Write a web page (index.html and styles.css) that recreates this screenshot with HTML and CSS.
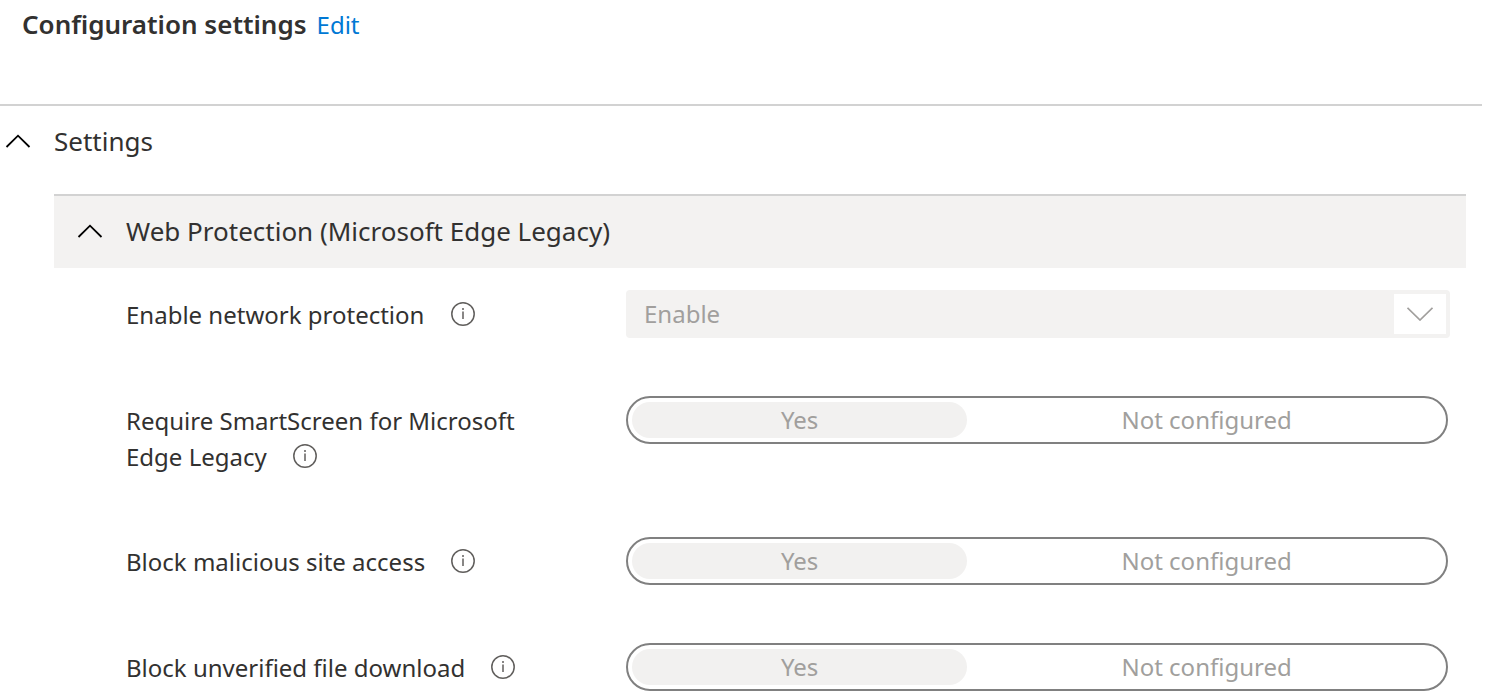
FILE: index.html
```
<!DOCTYPE html>
<html lang="en">
<head>
    <meta charset="UTF-8">
    <meta name="viewport" content="width=device-width, initial-scale=1.0">
    <title>Configuration settings</title>
    <link rel="stylesheet" href="styles.css">
</head>
<body>
<!-- Shared icons -->
<svg class="sprite" aria-hidden="true">
    <symbol id="chevron-up" viewBox="0 0 26 14">
        <path d="M1.500 13 13 1.700 24.500 13" fill="none" stroke="currentColor" stroke-width="1.800"/>
    </symbol>
    <symbol id="chevron-down" viewBox="0 0 26 14">
        <path d="M.5 .8 13 13 25.500 .8" fill="none" stroke="currentColor" stroke-width="1.700"/>
    </symbol>
    <symbol id="info" viewBox="0 0 24 24">
        <circle cx="12" cy="12" r="11.200" fill="none" stroke="currentColor" stroke-width="1.500"/>
        <path d="M12 9.500v7.500" stroke="currentColor" stroke-width="1.500"/>
        <circle cx="12" cy="7" r="1" fill="currentColor"/>
    </symbol>
</svg>

<header class="page-header">
    <h1>Configuration settings</h1>
    <a href="#edit">Edit</a>
</header>

<main class="settings">
    <h2>
        <button type="button" class="toggle-section" aria-expanded="true">
            <svg class="chevron"><use href="#chevron-up"/></svg>
            Settings
        </button>
    </h2>

    <section class="group">
        <h3>
            <button type="button" class="toggle-section group-header" aria-expanded="true">
                <svg class="chevron"><use href="#chevron-up"/></svg>
                Web Protection (Microsoft Edge Legacy)
            </button>
        </h3>

        <div class="rows">
            <div class="row">
                <div class="label">
                    <label for="network">Enable network protection</label>
                    <svg class="info"><use href="#info"/></svg>
                </div>
                <div class="dropdown">
                    <select id="network" disabled>
                        <option>Enable</option>
                    </select>
                    <span class="arrow"><svg><use href="#chevron-down"/></svg></span>
                </div>
            </div>

            <div class="row">
                <div class="label">
                    <span id="smartscreen">Require SmartScreen for Microsoft Edge Legacy</span>
                    <svg class="info"><use href="#info"/></svg>
                </div>
                <div class="switch" role="radiogroup" aria-labelledby="smartscreen">
                    <label class="yes"><input type="radio" name="smartscreen" checked disabled>Yes</label>
                    <label class="no"><input type="radio" name="smartscreen" disabled>Not configured</label>
                </div>
            </div>

            <div class="row">
                <div class="label">
                    <span id="malicious">Block malicious site access</span>
                    <svg class="info"><use href="#info"/></svg>
                </div>
                <div class="switch" role="radiogroup" aria-labelledby="malicious">
                    <label class="yes"><input type="radio" name="malicious" checked disabled>Yes</label>
                    <label class="no"><input type="radio" name="malicious" disabled>Not configured</label>
                </div>
            </div>

            <div class="row">
                <div class="label">
                    <span id="unverified">Block unverified file download</span>
                    <svg class="info"><use href="#info"/></svg>
                </div>
                <div class="switch" role="radiogroup" aria-labelledby="unverified">
                    <label class="yes"><input type="radio" name="unverified" checked disabled>Yes</label>
                    <label class="no"><input type="radio" name="unverified" disabled>Not configured</label>
                </div>
            </div>
        </div>
    </section>
</main>
</body>
</html>
```
FILE: styles.css
```
* {
    box-sizing: border-box;
}

body {
    margin: 0;
    background: #fff;
    color: #323130;
    font-family: "Segoe UI", "Noto Sans", "Open Sans", sans-serif;
    font-size: 24px;
    line-height: 36px;
}

h1, h2, h3 {
    margin: 0;
    font-size: 26px;
    font-weight: 400;
}

.sprite {
    display: none;
}

.page-header {
    display: flex;
    align-items: baseline;
    gap: 10px;
    padding: 6px 22px 61px;
}

.page-header h1 {
    font-weight: 600;
}

.page-header a {
    color: #0078d4;
    text-decoration: none;
}

.settings {
    margin-right: 7px;
    border-top: 2px solid #d2d2d2;
}

/* Collapsible headings */
.toggle-section {
    display: flex;
    align-items: center;
    gap: 23px;
    width: 100%;
    padding: 17px 5px 35px;
    border: none;
    background: none;
    color: inherit;
    font: inherit;
    text-align: left;
}

.chevron {
    width: 26px;
    height: 14px;
    color: #000;
}

.group {
    margin: 0 16px 0 54px;
}

.group-header {
    padding: 17px 23px 19px;
    border-top: 2px solid #d2d2d2;
    background: #f3f2f1;
}

/* Settings rows */
.rows {
    padding: 22px 16px 0 72px;
}

.row {
    display: grid;
    grid-template-columns: 500px 1fr;
    align-items: start;
    min-height: 48px;
    margin-bottom: 58px;
}

.row:last-child {
    margin-bottom: 0;
}

.label {
    padding: 7px 80px 4px 0;
}

.info {
    width: 24px;
    height: 24px;
    margin-left: 20px;
    color: #605e5c;
    vertical-align: -2px;
}

.dropdown {
    position: relative;
}

.dropdown select {
    display: block;
    width: 100%;
    height: 48px;
    padding: 0 60px 0 18px;
    border: none;
    border-radius: 4px;
    background: #f3f2f1;
    color: #a19f9d;
    font: inherit;
    opacity: 1;
    appearance: none;
}

/* White arrow box over the end of the select */
.arrow {
    position: absolute;
    top: 4px;
    right: 4px;
    bottom: 4px;
    display: flex;
    align-items: center;
    justify-content: center;
    width: 52px;
    background: #fff;
    color: #a19f9d;
    pointer-events: none;
}

.arrow svg {
    width: 26px;
    height: 14px;
}

.switch {
    display: flex;
    height: 48px;
    margin-right: 2px;
    padding: 4px 0 4px 4px;
    border: 2px solid #808080;
    border-radius: 24px;
    color: #a19f9d;
    text-align: center;
}

.switch input {
    position: absolute;
    margin: 0;
    opacity: 0;
}

.yes {
    flex: 7;
    border-radius: 18px;
    background: #f2f1f0;
}

.no {
    flex: 10;
}
```
